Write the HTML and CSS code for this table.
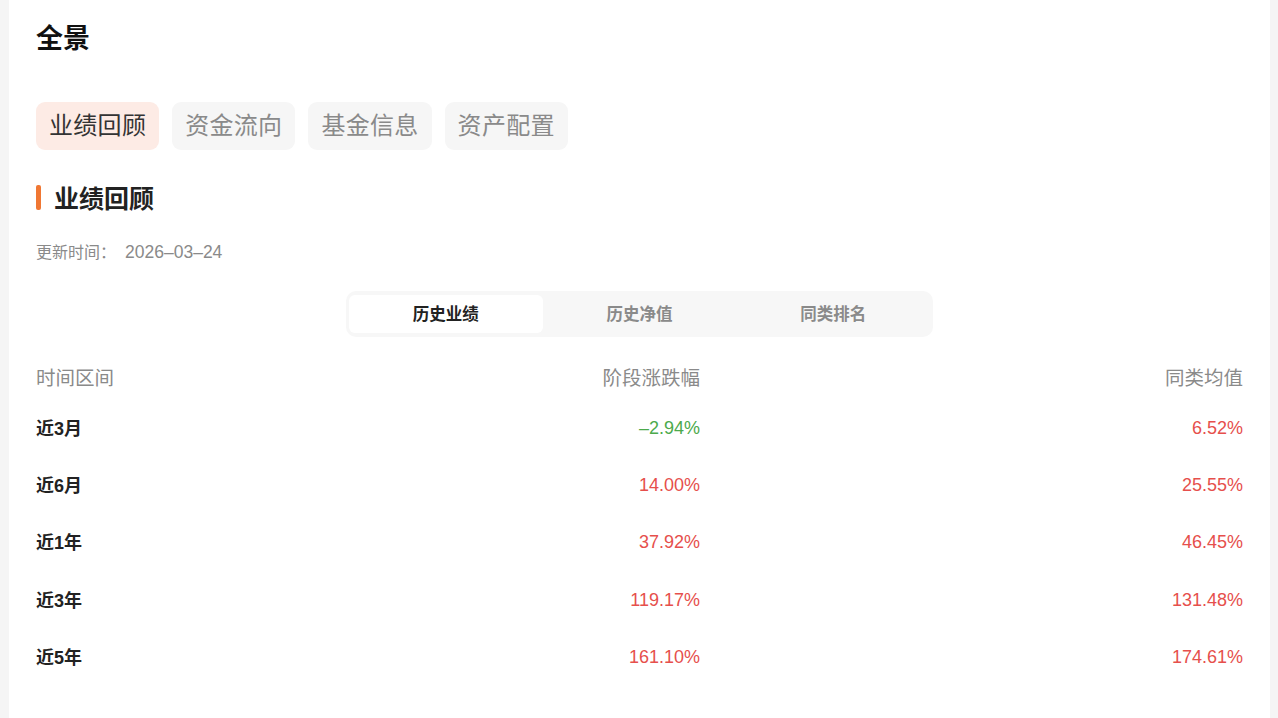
FILE: index.html
```html
<!DOCTYPE html>
<html lang="zh-CN">
<head>
<meta charset="utf-8">
<title>全景</title>
<link rel="stylesheet" href="styles.css">
</head>
<body>
<div class="card">
  <h1 class="title">全景</h1>
  <div class="tabs">
    <span class="tab tab-active">业绩回顾</span>
    <span class="tab">资金流向</span>
    <span class="tab">基金信息</span>
    <span class="tab">资产配置</span>
  </div>
  <h2 class="section-title"><span class="bar"></span>业绩回顾</h2>
  <div class="update">更新时间：<span class="date">2026–03–24</span></div>
  <div class="seg-wrap">
    <div class="seg">
      <span class="seg-item seg-active">历史业绩</span>
      <span class="seg-item">历史净值</span>
      <span class="seg-item">同类排名</span>
    </div>
  </div>
  <div class="table">
    <div class="row head">
      <span class="c1">时间区间</span>
      <span class="c2">阶段涨跌幅</span>
      <span class="c3">同类均值</span>
    </div>
    <div class="row">
      <span class="c1 label">近3月</span>
      <span class="c2 num down">–2.94%</span>
      <span class="c3 num up">6.52%</span>
    </div>
    <div class="row">
      <span class="c1 label">近6月</span>
      <span class="c2 num up">14.00%</span>
      <span class="c3 num up">25.55%</span>
    </div>
    <div class="row">
      <span class="c1 label">近1年</span>
      <span class="c2 num up">37.92%</span>
      <span class="c3 num up">46.45%</span>
    </div>
    <div class="row">
      <span class="c1 label">近3年</span>
      <span class="c2 num up">119.17%</span>
      <span class="c3 num up">131.48%</span>
    </div>
    <div class="row">
      <span class="c1 label">近5年</span>
      <span class="c2 num up">161.10%</span>
      <span class="c3 num up">174.61%</span>
    </div>
  </div>
</div>
</body>
</html>
```

FILE: styles.css
```css
* { box-sizing: border-box; }
html, body {
  margin: 0;
  padding: 0;
  background: #f5f5f5;
  font-family: "Liberation Sans", "Noto Sans CJK SC", sans-serif;
  height: 718px;
  overflow: hidden;
}
.card {
  margin: 0 8px 0 9px;
  background: #fff;
  min-height: 718px;
  padding: 20px 27px 0 27px;
}
.title {
  margin: 0;
  font-size: 27px;
  line-height: 38px;
  font-weight: 700;
  color: #111;
}
.tabs {
  display: flex;
  gap: 13px;
  margin-top: 44px;
}
.tab {
  height: 48px;
  padding: 0 13px;
  border-radius: 9px;
  background: #f6f6f6;
  color: #8a8a8a;
  font-size: 24px;
  line-height: 48px;
  letter-spacing: 0.3px;
}
.tab-active {
  background: #fdebe5;
  color: #333;
}
.section-title {
  display: flex;
  align-items: center;
  margin: 30px 0 0 0;
  height: 34px;
  font-size: 25px;
  font-weight: 700;
  color: #222;
}
.bar {
  width: 5px;
  height: 25px;
  border-radius: 2px;
  background: #f07733;
  margin-right: 13px;
}
.update {
  display: flex;
  align-items: baseline;
  margin-top: 27px;
  height: 22px;
  line-height: 22px;
  font-size: 16px;
  color: #8a8a8a;
}
.date {
  margin-left: 9px;
  font-size: 17.5px;
  line-height: 22px;
}
.seg-wrap {
  display: flex;
  justify-content: center;
  margin-top: 28px;
}
.seg {
  display: flex;
  width: 587px;
  height: 46px;
  padding: 4px 3px;
  background: #f7f7f7;
  border-radius: 10px;
}
.seg-item {
  flex: 1;
  text-align: center;
  line-height: 38px;
  font-size: 16.5px;
  font-weight: 700;
  color: #8a8a8a;
  border-radius: 6px;
}
.seg-active {
  background: #fff;
  color: #222;
}
.table {
  margin-top: 17px;
}
.row {
  display: grid;
  grid-template-columns: 332px 332px 1fr;
  height: 57.3px;
  align-items: center;
  font-size: 18px;
}
.row.head {
  height: 44px;
  font-size: 19.5px;
  color: #8a8a8a;
}
.c2, .c3 { text-align: right; }
.num { padding-top: 3px; }
.label {
  font-weight: 700;
  color: #222;
}
.up { color: #e64f4c; }
.down { color: #4caa4c; }
```
